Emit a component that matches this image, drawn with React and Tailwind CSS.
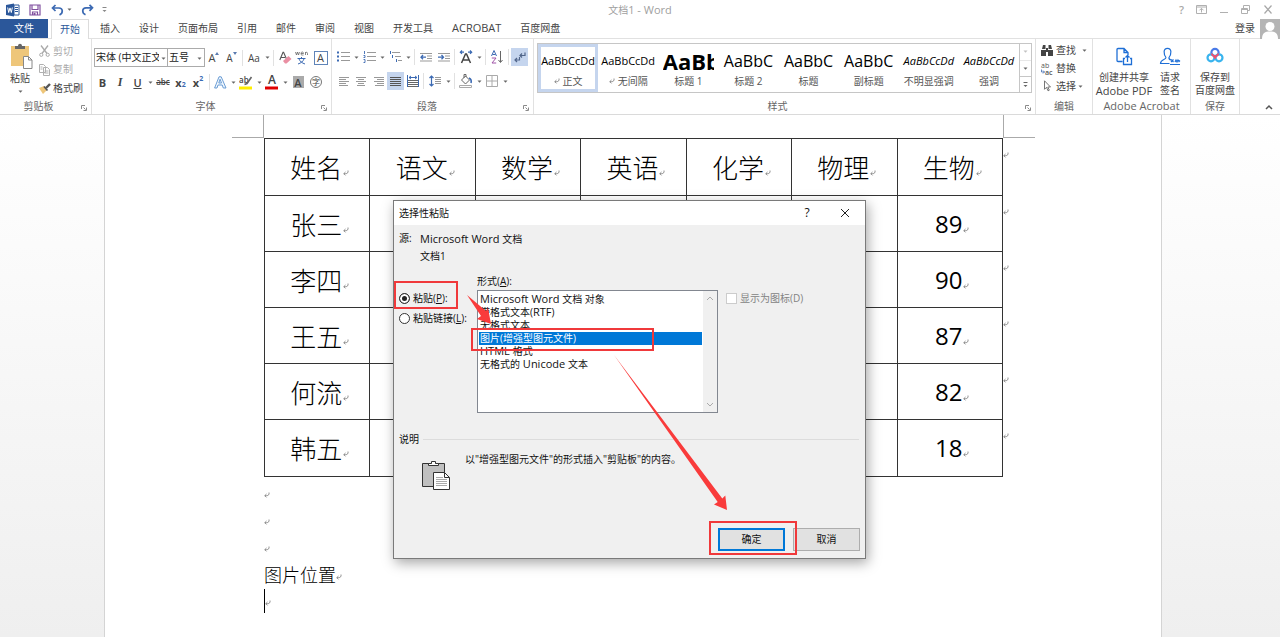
import React from "react";

const UI = "font-['Open_Sans','Noto_Sans_CJK_SC',sans-serif]";

function Svg({ w, h, children, className = "" }) {
  return (
    <svg width={w} height={h} viewBox={`0 0 ${w} ${h}`} fill="none" className={`shrink-0 ${className}`} aria-hidden="true">
      {children}
    </svg>
  );
}

// Latin runs are set one pixel larger than the Chinese text around them.
function Mixed({ text }) {
  return (
    <span className="whitespace-pre">
      {text.split(/([A-Za-z ]{3,})/).map((part, i) => (
        <span key={i} className={i % 2 ? "text-[11px]" : ""}>{part}</span>
      ))}
    </span>
  );
}

function Caret({ label = "更多选项", className = "w-2" }) {
  return (
    <button type="button" aria-label={label} className={`flex h-[18px] items-center justify-center ${className}`}>
      <Svg w={5} h={3}><path d="M0.5 0.5h4L2.5 2.7z" fill="#666" /></Svg>
    </button>
  );
}

function Sep() {
  return <span className="mx-[2px] h-4 w-px bg-[#e1e1e1]" />;
}

function Tool({ label, className = "w-[18px]", children }) {
  return (
    <button type="button" aria-label={label} className={`flex h-[18px] shrink-0 items-center justify-center leading-none ${className}`}>
      {children}
    </button>
  );
}

function Launcher() {
  return (
    <button type="button" aria-label="对话框启动器" className="absolute right-[4px] bottom-[3px]">
      <Svg w={6} h={6}><path d="M0.5 4V0.5H4M2.5 2.5l2 2M5.5 2.5v3h-3" stroke="#8a8a8a" /></Svg>
    </button>
  );
}

function Group({ title, launcher, className = "", children }) {
  return (
    <section className={`relative flex flex-col border-r border-[#e1e1e1] ${className}`}>
      <div className="h-[60px]">{children}</div>
      <div className={`text-center text-[10px] leading-4 text-[#666] ${launcher ? "pr-[14px]" : ""}`}>{title}</div>
      {launcher && <Launcher />}
    </section>
  );
}

function Mark({ className = "" }) {
  return (
    <Svg w={6} h={6} className={className}><path d="M5 0.5c0.4 2-0.5 3.2-2.5 3.2H0.8M2.5 2L0.8 3.7l1.7 1.7" stroke="#777" strokeWidth="0.8" /></Svg>
  );
}

function TitleBar() {
  return (
    <header className="grid h-[19px] grid-cols-[1fr_auto_1fr] items-center">
      <div className="flex items-center pl-[6px]">
        <Svg w={14} h={14}>
          <path d="M8 2h5v10H8z" fill="#fff" stroke="#2b579a" />
          <path d="M9 4.5h3M9 6.5h3M9 8.5h3" stroke="#2b579a" />
          <path d="M0 2l8-1.5v13L0 12z" fill="#2b579a" />
          <path d="M1.7 4.5l1 5 1.3-4.6 1.3 4.6 1-5" stroke="#fff" />
        </Svg>
        <button type="button" aria-label="保存" className="ml-[9px]">
          <Svg w={12} h={12}><path d="M1 1h10v10H1zM3 1v4.5h6V1M3.5 11V8h5v3" stroke="#80509f" strokeWidth="1.2" /><path d="M4.5 9h2v2h-2z" fill="#80509f" /></Svg>
        </button>
        <button type="button" aria-label="撤消" className="ml-[10px]">
          <Svg w={13} h={12}><path d="M4.5 1L1.5 4l3 3M2 4h6c4 0 4.5 5 0.5 7" stroke="#3c6ab3" strokeWidth="1.7" /></Svg>
        </button>
        <Caret label="撤消列表" className="w-[10px]" />
        <button type="button" aria-label="重复" className="ml-[7px]">
          <Svg w={13} h={12}><path d="M8.5 0.8l3 3-3 3M11 3.8H5C1 3.8 0.5 9 4.5 10.8" stroke="#3c6ab3" strokeWidth="1.7" /></Svg>
        </button>
        <button type="button" aria-label="自定义快速访问工具栏" className="ml-[8px]">
          <Svg w={5} h={6}><path d="M0.5 0.5h4" stroke="#888" /><path d="M0.5 3h4L2.5 5z" fill="#888" /></Svg>
        </button>
      </div>
      <h1 className="text-[11px] leading-[18px] text-[#a0a0a0]"><span className="text-[10px]">文档</span>1 - Word</h1>
      <div className="flex items-center justify-end gap-[12px] pr-[7px] text-[#a8a8a8]">
        <button type="button" aria-label="帮助" className="text-[11px] font-semibold leading-none">?</button>
        <button type="button" aria-label="功能区显示选项">
          <Svg w={11} h={9}><path d="M0.5 0.5h10v8h-10zM0.5 2h10M5.5 7.5V3.5M3.5 5.3l2-2 2 2" stroke="#b0b0b0" /></Svg>
        </button>
        <button type="button" aria-label="最小化"><Svg w={10} h={9}><path d="M1 7.5h8" stroke="#b0b0b0" /></Svg></button>
        <button type="button" aria-label="还原"><Svg w={10} h={9}><path d="M0.5 3.5h6v5h-6zM2.5 3V0.5h6v5H7M0.5 4.5h6" stroke="#b0b0b0" /></Svg></button>
        <button type="button" aria-label="关闭"><Svg w={10} h={9}><path d="M1.5 0.5l7 8M8.5 0.5l-7 8" stroke="#a8a8a8" strokeWidth="1.2" /></Svg></button>
      </div>
    </header>
  );
}

const TABS = ["插入", "设计", "页面布局", "引用", "邮件", "审阅", "视图", "开发工具", "ACROBAT", "百度网盘"];

function Tabs() {
  return (
    <nav className="flex h-5 items-stretch border-b border-[#e1e1e1] text-[10px] text-[#444]">
      <button type="button" className="w-12 bg-[#2b579a] text-white">文件</button>
      <button type="button" className="-mb-px ml-[3px] w-[38px] border border-b-0 border-[#dcdcdc] bg-white text-[#2b579a]">开始</button>
      <div className="flex grow gap-[19px] pl-[11px]">
        {TABS.map((t) => (
          <button key={t} type="button" className={t === "ACROBAT" ? "text-[11px]" : ""}>{t}</button>
        ))}
      </div>
      <button type="button" className="mr-[5px]">登录</button>
      <Svg w={20} h={20}><path d="M0 0h20v20H0z" fill="#b5b5b5" /><circle cx="10" cy="7.5" r="4.5" fill="#fff" /><path d="M2 20c0-6 3-7.5 8-7.5s8 1.5 8 7.5z" fill="#fff" /></Svg>
    </nav>
  );
}

function Clipboard() {
  return (
    <Group title="剪贴板" launcher className="w-[92px]">
      <div className="flex pt-[3px] whitespace-nowrap">
        <button type="button" className="ml-[7px] flex w-[26px] flex-col items-center text-[10px] leading-3 text-[#444]">
          <Svg w={25} h={28} className="mb-[2px]">
            <path d="M3 4h18v20H3z" fill="#eec67a" />
            <path d="M7 7V4h3c0-3 4-3 4 0h3v3z" fill="#666" />
            <path d="M15.5 14.5h5l3.5 3.5v8.5h-8.5z" fill="#fff" stroke="#888" /><path d="M20.5 14.5V18H24" stroke="#888" />
          </Svg>
          粘贴
          <Svg w={5} h={3} className="mt-[6px]"><path d="M0.5 0.5h4L2.5 2.7z" fill="#666" /></Svg>
        </button>
        <div className="ml-[6px] flex flex-col text-[10px] text-[#aaa]">
          <button type="button" className="flex h-[18px] items-center gap-[3px]">
            <Svg w={11} h={12}><path d="M2 0.5l6 8M9 0.5l-6 8" stroke="#aaa" strokeWidth="1.3" /><circle cx="2.3" cy="9.8" r="1.6" stroke="#aaa" /><circle cx="8.7" cy="9.8" r="1.6" stroke="#aaa" /></Svg>剪切
          </button>
          <button type="button" className="flex h-[19px] items-center gap-[3px]">
            <Svg w={11} h={12}><path d="M0.5 0.5h4l2 2v6h-6zM4.5 3.5h4l2 2v6h-6zM5.5 7h4M5.5 9h4M1.5 3h2M1.5 5h2" stroke="#b0b0b0" /></Svg>复制
          </button>
          <button type="button" className="flex h-[18px] items-center gap-[2px] text-[#444]">
            <Svg w={12} h={11}><path d="M0 5l5-2 3 4-4 4z" fill="#eec67a" /><path d="M5 3.5l3.5 4" stroke="#555" strokeWidth="1.6" /><path d="M7 5l4-4" stroke="#555" strokeWidth="2.4" /></Svg>格式刷
          </button>
        </div>
      </div>
    </Group>
  );
}

function FontGroup() {
  return (
    <Group title="字体" launcher className="w-[240px] pl-[2px]">
      <div className="flex items-center pt-[9px] text-[#444]">
        <div className="flex h-[19px] w-[74px] border border-[#ababab]">
          <select aria-label="字体" className="w-[64px] appearance-none overflow-hidden text-clip pl-px text-[10px] text-[#222]"><option>宋体 (中文正文)</option></select>
          <Caret label="字体列表" />
        </div>
        <div className="flex h-[19px] w-[37px] border border-l-0 border-[#ababab]">
          <select aria-label="字号" className="w-[27px] appearance-none pl-px text-[10px] text-[#222]"><option>五号</option></select>
          <Caret label="字号列表" />
        </div>
        <Tool label="增大字号"><span className="text-[11px]">A</span><Svg w={4} h={3} className="mb-2"><path d="M0 3l2-3 2 3z" fill="#5a7bb0" /></Svg></Tool>
        <Tool label="减小字号" className="w-[17px]"><span className="text-[10px]">A</span><Svg w={4} h={3} className="mb-2"><path d="M0 0l2 3 2-3z" fill="#5a7bb0" /></Svg></Tool>
        <Sep />
        <Tool label="更改大小写"><span className="text-[10px]">Aa</span></Tool>
        <Caret />
        <Sep />
        <Tool label="清除所有格式"><Svg w={13} h={13}><path d="M0.8 9L4 1.200h0.600L7.500 8M2 6.500h4" stroke="#555" strokeWidth="1.100" /><path d="M4 10l5.500-5 3 3-5 4.500H6z" fill="#ea8fa3" /></Svg></Tool>
        <Tool label="拼音指南" className="w-[15px]"><Svg w={13} h={15}><path d="M0.500 2l1 3 1-3 1 3 1-3M6 3.500h2.500c0-2-2.500-2-2.500 0s1 1.500 2.500 1.500M10.500 5V2M10.500 3c0.500-1 2-1 2 0.500V5" stroke="#666" strokeWidth="0.800" /><path d="M2.500 8.500h8M6.500 7v1.500M4 9c1 2.500 3 4 6 5M9 9c-1 2.500-3 4-6 5" stroke="#3c6ab3" /></Svg></Tool>
        <Tool label="字符边框" className="ml-[2px] w-[19px]"><span className="flex size-[14px] items-center justify-center border border-[#5f84b8] text-[11px]">A</span></Tool>
      </div>
      <div className="flex items-center pt-[6px] text-[11px] text-[#444]">
        <Tool label="加粗" className="w-[17px] font-bold">B</Tool>
        <Tool label="倾斜"><em className="font-['Liberation_Serif',serif] text-[12px] font-bold">I</em></Tool>
        <Tool label="下划线" className="w-[17px] font-semibold"><span className="underline">U</span></Tool>
        <Caret />
        <Tool label="删除线"><span className="text-[8px] font-semibold line-through">abc</span></Tool>
        <Tool label="下标" className="w-[17px] font-bold">x<span className="mt-1 text-[7px] text-[#3c6ab3]">2</span></Tool>
        <Tool label="上标" className="w-[18px] font-bold">x<span className="mb-2 text-[7px] text-[#3c6ab3]">2</span></Tool>
        <Sep />
        <Tool label="文本效果" className="w-[17px]"><Svg w={13} h={13}><path d="M0.600 12L5 0.800h2.200L12 12H9.300L8.200 9H4L3 12zM4.800 7h2.700L6.100 3.200z" stroke="#5b93d0" strokeWidth="0.900" fill="#f1f7fd" /></Svg></Tool>
        <Caret />
        <Tool label="突出显示"><Svg w={14} h={15}><text x="0" y="8" fontSize="8" fill="#444" fontFamily="Open Sans" fontWeight="600">ab</text><path d="M12.5 2L8 8.5l-2.5 1" stroke="#666" strokeWidth="1.6" /><path d="M0 11.5h13v3H0z" fill="#ffee00" /></Svg></Tool>
        <Caret />
        <Tool label="字体颜色"><Svg w={14} h={15}><text x="3" y="9" fontSize="12" fill="#444" fontFamily="Open Sans" fontWeight="600">A</text><path d="M0 11.5h13v3H0z" fill="#e00000" /></Svg></Tool>
        <Caret />
        <Tool label="字符底纹"><span className="flex h-3 w-[11px] items-center justify-center bg-[#aaa] text-[11px] font-semibold">A</span></Tool>
        <Tool label="带圈字符"><span className="flex size-[12px] items-center justify-center rounded-full border border-[#777] text-[8px]">字</span></Tool>
      </div>
    </Group>
  );
}

function Lines({ xs, color = "#999" }) {
  return <path d={xs.map(([a, b], i) => `M${a} ${1.5 + i * 2}H${b}`).join("")} stroke={color} />;
}

function Paragraph() {
  return (
    <Group title="段落" launcher className="w-[202px] pl-[3px]">
      <div className="flex items-center pt-[9px]">
        <Tool label="项目符号" className="w-[17px]"><Svg w={13} h={12}><path d="M0 1.5h2M0 5.5h2M0 9.5h2" stroke="#3c6ab3" strokeWidth="2" /><path d="M4 1.5h9M4 5.5h9M4 9.5h9" stroke="#999" /></Svg></Tool>
        <Caret className="w-[9px]" />
        <Tool label="编号" className="w-[17px]"><Svg w={13} h={12}><path d="M1.5 0v3M0.5 4.5h1.5v2H0.5M0.5 8.5h1.5v3H0.5" stroke="#3c6ab3" strokeWidth="0.9" /><path d="M4 1.5h9M4 5.5h9M4 9.5h9" stroke="#999" /></Svg></Tool>
        <Caret className="w-[9px]" />
        <Tool label="多级列表" className="w-[17px]"><Svg w={13} h={12}><path d="M1.5 0v3M3.5 4v3M7.5 8v3" stroke="#3c6ab3" /><path d="M3 1.5h8M6 5.5h6M9 9.5h4" stroke="#999" /></Svg></Tool>
        <Caret />
        <Sep />
        <Tool label="减少缩进量"><Svg w={12} h={9}><path d="M0 0.500h12M7 3h5M7 5.500h5M0 8h12" stroke="#999" /><path d="M3 2L1 4.200l2 2M1 4.200h5" stroke="#3c6ab3" strokeWidth="1.3" /></Svg></Tool>
        <Tool label="增加缩进量" className="w-[17px]"><Svg w={12} h={9}><path d="M0 0.500h12M7 3h5M7 5.500h5M0 8h12" stroke="#999" /><path d="M3.5 2l2 2.200-2 2M0 4.200h5" stroke="#3c6ab3" strokeWidth="1.3" /></Svg></Tool>
        <Sep />
        <Tool label="中文版式"><Svg w={14} h={14}><path d="M2.5 13L6.500 4h1l4 9M4.500 10h5.500" stroke="#444" strokeWidth="1.5" /><path d="M3 0.5L1.300 2.2l1.700 1.7M1.300 2.2H5M11 0.5l1.700 1.7L11 3.900M12.700 2.2H9" stroke="#3c6ab3" strokeWidth="1.2" /></Svg></Tool>
        <Caret />
        <Sep />
        <Tool label="排序"><Svg w={13} h={14}><path d="M0.5 6L3 0.5 5.5 6M1.5 4.5h3" stroke="#3c6ab3" /><path d="M0.8 8h4.2l-4 5h4.2" stroke="#a054a8" /><path d="M9.5 1v11M7.5 10l2 2.5 2-2.5" stroke="#666" /></Svg></Tool>
        <Sep />
        <Tool label="显示编辑标记" className="w-[17px] bg-[#c5d5ee]"><Svg w={12} h={11}><path d="M11 0.5v3H6M8 1.5l-2 2 2 2M5.5 5v3H1M3 6l-2 2 2 2" stroke="#50658a" strokeWidth="1.2" /></Svg></Tool>
      </div>
      <div className="flex items-center pt-[6px]">
        <Tool label="左对齐" className="w-[17px]"><Svg w={10} h={11}><Lines xs={[[0, 10], [0, 7], [0, 10], [0, 7], [0, 9]]} /></Svg></Tool>
        <Tool label="居中"><Svg w={10} h={11}><Lines xs={[[0, 10], [2, 8], [0, 10], [2, 8], [1, 9]]} /></Svg></Tool>
        <Tool label="右对齐" className="w-[17px]"><Svg w={10} h={11}><Lines xs={[[0, 10], [3, 10], [0, 10], [3, 10], [1, 10]]} /></Svg></Tool>
        <Tool label="两端对齐" className="w-[17px] bg-[#c5d5ee]"><Svg w={11} h={11}><Lines color="#555" xs={[[0, 11], [0, 11], [0, 11], [0, 11], [0, 11]]} /></Svg></Tool>
        <Tool label="分散对齐" className="w-[17px]"><Svg w={12} h={12}><path d="M0.5 0v12M11.5 0v12M2 2.5h8M4 1L2 2.5 4 4M8 1l2 1.5L8 4" stroke="#3c6ab3" /><path d="M1 5.5h10M1 7.5h10M1 9.5h10M1 11.5h10" stroke="#666" /></Svg></Tool>
        <Sep />
        <Tool label="行距"><Svg w={12} h={12}><path d="M2.5 1v10M0.5 3l2-2 2 2M0.5 9l2 2 2-2" stroke="#3c6ab3" strokeWidth="1.2" /><path d="M6 2.5h6M6 4.5h6M6 6.5h6M6 8.5h6" stroke="#999" /></Svg></Tool>
        <Caret />
        <Sep />
        <Tool label="底纹"><Svg w={14} h={14}><path d="M2.5 6l4-4 4 4-4 4z" stroke="#666" /><path d="M5 4V0.5h2V3" stroke="#666" /><path d="M10 4c2.5 1 2.5 3 2 5" stroke="#3c6ab3" strokeWidth="1.6" /><path d="M0.5 11.5h12v2h-12z" stroke="#aaa" /></Svg></Tool>
        <Caret />
        <Tool label="边框"><Svg w={12} h={12}><path d="M0.5 0.5h11v11H0.5zM6 0.5v11M0.5 6h11" stroke="#aaa" /></Svg></Tool>
        <Caret />
      </div>
    </Group>
  );
}

const STYLES = [
  { name: "正文", sample: "AaBbCcDd", cls: "text-[11px]", mark: true, active: true },
  { name: "无间隔", sample: "AaBbCcDd", cls: "text-[11px]", mark: true },
  { name: "标题 1", sample: "AaBb", cls: "max-w-[51px] overflow-hidden text-[22px] font-bold" },
  { name: "标题 2", sample: "AaBbC", cls: "text-[16px]" },
  { name: "标题", sample: "AaBbC", cls: "text-[16px]" },
  { name: "副标题", sample: "AaBbC", cls: "text-[16px]" },
  { name: "不明显强调", sample: "AaBbCcDd", cls: "text-[11px] italic text-[#555]" },
  { name: "强调", sample: "AaBbCcDd", cls: "text-[11px] italic" },
];

function Gallery() {
  return (
    <Group title="样式" launcher className="min-w-0 grow basis-0 px-[3px]">
      <div className="mt-1 flex h-[50px] border border-[#c6c6c6]">
        <div className="flex grow">
          {STYLES.map((s) => (
            <button key={s.name} type="button" className={`flex min-w-0 grow basis-0 flex-col items-center ${s.active ? "shadow-[inset_0_0_0_3px_#c5d5ee]" : ""}`}>
              <span className={`mt-[3px] block h-7 leading-7 whitespace-nowrap text-black ${s.cls}`}>{s.sample}</span>
              <span className="flex items-center gap-[3px] text-[10px] leading-3 whitespace-nowrap text-[#555]">{s.mark && <Mark />}{s.name}</span>
            </button>
          ))}
        </div>
        <div className="flex w-3 flex-col divide-y divide-[#c6c6c6] border-l border-[#c6c6c6]">
          <Caret label="上一行" className="w-full grow opacity-40" />
          <Caret label="下一行" className="w-full grow" />
          <button type="button" aria-label="其他样式" className="flex h-4 items-center justify-center"><Svg w={5} h={6}><path d="M0.5 0.5h4" stroke="#666" /><path d="M0.5 3h4L2.5 5z" fill="#666" /></Svg></button>
        </div>
      </div>
    </Group>
  );
}

function BigButton({ icon, lines, className }) {
  return (
    <button type="button" className={`flex flex-col items-center pt-[8px] text-[10px] leading-[13px] whitespace-nowrap text-[#444] ${className}`}>
      <span className="flex h-[24px] items-start">{icon}</span>
      {lines.map((l) => <span key={l} className={l === "Adobe PDF" ? "text-[11px]" : ""}>{l}</span>)}
    </button>
  );
}

function Ribbon() {
  return (
    <div className="flex h-[76px] border-b border-[#dadada] bg-white">
      <Clipboard />
      <FontGroup />
      <Paragraph />
      <Gallery />
      <Group title="编辑" className="w-[57px]">
        <div className="flex flex-col pt-[2px] pl-[5px] text-[10px] text-[#444]">
          <div className="flex h-[18px] items-center">
            <button type="button" className="flex items-center gap-[3px]"><Svg w={12} h={11}><path d="M1 4l1-4h2.5v4zM7.5 4V0H10l1 4zM0 5h5v6H0zM7 5h5v6H7zM5 3h2v4H5z" fill="#444" /></Svg>查找</button>
            <Caret className="ml-[4px] w-2" />
          </div>
          <button type="button" className="flex h-[18px] items-center gap-[3px]"><Svg w={12} h={13}><text x="0" y="6" fontSize="7" fill="#555" fontFamily="Open Sans">ab</text><text x="4" y="12.500" fontSize="7" fill="#555" fontFamily="Open Sans" fontWeight="600">ac</text><path d="M0.500 7.5v2.500h3M2 8.5l1.5 1.5L2 11.5" stroke="#3c6ab3" strokeWidth="0.8" /></Svg>替换</button>
          <div className="flex h-[18px] items-center">
            <button type="button" className="flex items-center gap-[3px]"><Svg w={12} h={12}><path d="M3.5 0.8v8.5l2-2 1.5 3.5 1.3-0.6-1.5-3.2h2.7z" stroke="#666" strokeWidth="0.9" /></Svg>选择</button>
            <Caret />
          </div>
        </div>
      </Group>
      <Group title={<span className="text-[11px]">Adobe Acrobat</span>} className="w-[98px]">
        <div className="flex">
          <BigButton className="w-[62px]" lines={["创建并共享", "Adobe PDF"]} icon={
            <Svg w={17} h={19}><path d="M6.5 14.5H2a1 1 0 0 1-1-1v-11a1 1 0 0 1 1-1h6l4 4v2.5M8 1.5v4h4M9 11.5H7.5v6h8v-6H14M11.5 15V8.5M9.5 10.5l2-2 2 2" stroke="#1f6fd6" strokeWidth="1.3" /></Svg>} />
          <BigButton className="w-[30px]" lines={["请求", "签名"]} icon={
            <Svg w={22} h={20}><path d="M7 10.5C4.5 7 4 1.3 8.5 1.3S12.5 7 10 10.5c-0.3 1.5 0.5 2 2 2.5M7 10.5c0 2.5-5.5 1.5-5.5 6h9M11 17.5h10M12 12.5l2.5 2.5m0-2.5L12 15M16 15l1-2 1 2 1-2 1 1.5 1-1" stroke="#1f6fd6" strokeWidth="1.2" /></Svg>} />
        </div>
      </Group>
      <Group title="保存" className="w-[49px]">
        <BigButton className="w-full" lines={["保存到", "百度网盘"]} icon={
          <Svg w={18} h={18}><circle cx="9" cy="5.5" r="3.6" stroke="#4a7be8" strokeWidth="2.2" /><circle cx="5" cy="10.8" r="3.500" stroke="#39b4ee" strokeWidth="2.2" /><circle cx="13" cy="10.8" r="3.500" stroke="#39b4ee" strokeWidth="2.2" /><path d="M5.600 6.500c0.600 1.800 2 2.600 3.400 2.600s2.800-0.800 3.400-2.600M7 8l2 3 2-3" stroke="#f0506e" strokeWidth="1.800" /></Svg>} />
      </Group>
      <div className="flex w-10 items-end justify-end pr-[7px] pb-1">
        <button type="button" aria-label="折叠功能区"><Svg w={8} h={6}><path d="M1 5l3-3 3 3" stroke="#555" strokeWidth="1.5" /></Svg></button>
      </div>
    </div>
  );
}

const HEAD = ["姓名", "语文", "数学", "英语", "化学", "物理", "生物"];
const ROWS = [["张三", "89"], ["李四", "90"], ["王五", "87"], ["何流", "82"], ["韩五", "18"]];

function Cell({ text, end }) {
  return (
    <>
      <span className="flex items-center justify-center pl-[5px]">
        {text}
        {text && <Mark className="mt-3 ml-px" />}
      </span>
      {end && <Mark className="absolute top-[13px] -right-[7px]" />}
    </>
  );
}

function ScoreTable() {
  return (
    <table className="w-full table-fixed border-collapse text-[26px] leading-none font-light text-black">
      <thead>
        <tr className="h-[57px]">
          {HEAD.map((h, i) => (
            <th key={h} className="relative border border-[#333] p-0 font-light"><Cell text={h} end={i === 6} /></th>
          ))}
        </tr>
      </thead>
      <tbody>
        {ROWS.map(([name, score]) => (
          <tr key={name} className="h-14 last:h-[57px]">
            {HEAD.map((h, i) => (
              <td key={h} className={`relative border border-[#333] p-0 ${i === 6 ? "font-['Open_Sans',sans-serif] text-[24px] font-normal" : ""}`}>
                <Cell text={i === 0 ? name : i === 6 ? score : ""} end={i === 6} />
              </td>
            ))}
          </tr>
        ))}
      </tbody>
    </table>
  );
}

const FORMATS = ["Microsoft Word 文档 对象", "带格式文本(RTF)", "无格式文本", "图片(增强型图元文件)", "HTML 格式", "无格式的 Unicode 文本"];

function PasteDialog() {
  return (
    <div role="dialog" aria-label="选择性粘贴" className={`absolute top-[85px] left-[288px] flex min-h-[359px] w-[473px] flex-col border border-[#7a7a7a] bg-[#f0f0f0] text-[10px] text-[#111] shadow-[2px_4px_12px_rgba(0,0,0,0.35)] ${UI}`}>
      <div className="flex h-6 items-center bg-white pl-[5px]">
        <h2 className="grow">选择性粘贴</h2>
        <button type="button" aria-label="帮助" className="w-6 text-[12px]">?</button>
        <button type="button" aria-label="关闭" className="mr-[15px] ml-[21px]"><Svg w={10} h={10}><path d="M1 1l8 8M9 1l-8 8" stroke="#222" /></Svg></button>
      </div>
      <div className="grid grid-cols-[21px_1fr] pt-[5px] pl-[5px] leading-[17px]">
        <span>源:</span>
        <Mixed text="Microsoft Word 文档" />
        <span />
        <span>文档1</span>
      </div>
      <div className="mt-[7px] flex">
        <div className="w-[83px] pt-4 pl-[5px] whitespace-nowrap">
          <label className="flex h-5 items-center gap-[3px]">
            <input type="radio" name="mode" defaultChecked className="size-[11px] appearance-none rounded-full border border-[#333] bg-white checked:bg-[#222] checked:shadow-[inset_0_0_0_2px_#fff]" />
            <span>粘贴(<u>P</u>):</span>
          </label>
          <label className="flex h-5 items-center gap-[3px]">
            <input type="radio" name="mode" className="size-[11px] appearance-none rounded-full border border-[#333] bg-white" />
            <span>粘贴链接(<u>L</u>):</span>
          </label>
        </div>
        <div className="w-[241px]">
          <div id="format-label" className="leading-[18px]">形式(<u>A</u>):</div>
          <div className="flex h-[123px] border border-[#828790] bg-white">
            <ul role="listbox" aria-labelledby="format-label" className="grow px-px pt-[2px]">
              {FORMATS.map((f, i) => (
                <li key={f} role="option" aria-selected={i === 3} className={`flex h-[13px] items-center overflow-hidden pl-px ${i === 3 ? "bg-[#0078d7] text-white" : ""}`}><Mixed text={f} /></li>
              ))}
            </ul>
            <div className="flex w-[14px] flex-col items-center justify-between bg-[#f0f0f0] py-[5px]">
              <Svg w={8} h={5}><path d="M1 4l3-3 3 3" stroke="#aaa" /></Svg>
              <Svg w={8} h={5}><path d="M1 1l3 3 3-3" stroke="#aaa" /></Svg>
            </div>
          </div>
        </div>
        <label className="ml-2 box-content flex h-5 items-center gap-[3px] self-start pt-4 text-[#838383]">
          <input type="checkbox" disabled className="size-[11px] appearance-none border border-[#ccc] bg-white" />
          显示为图标(D)
        </label>
      </div>
      <div className="mt-[18px] flex items-center gap-1 pr-[6px] pl-[5px] leading-4">
        说明<span className="h-px grow bg-[#dcdcdc]" />
      </div>
      <div className="mt-1 flex pl-[27px] leading-4">
        <Svg w={30} h={31} className="mt-[9px] mr-[14px]">
          <path d="M1.500 3.500h22v23h-22z" fill="#c0c0c0" stroke="#333" />
          <path d="M7.500 5.5v-2h3v-2h4v2h3v2z" fill="#fff" stroke="#333" />
          <path d="M12.5 12.5h11l5 5v12h-16z" fill="#fff" stroke="#333" />
          <path d="M23.5 12.5v5h5" stroke="#333" /><path d="M15 17.5h7M15 19.5h11M15 21.5h11M15 23.5h11M15 25.5h11" stroke="#aaa" />
        </Svg>
        <p>以"增强型图元文件"的形式插入"剪贴板"的内容。</p>
      </div>
      <div className="mt-auto flex justify-end gap-2 pr-[5px] pb-[7px]">
        <button type="button" className="h-[23px] w-[67px] border-2 border-[#0078d7] bg-[#e1e1e1]">确定</button>
        <button type="button" className="h-[23px] w-[67px] border border-[#adadad] bg-[#e1e1e1]">取消</button>
      </div>
      <Annotations />
    </div>
  );
}

function Annotations() {
  return (
    <svg className="pointer-events-none absolute top-0 left-0 size-full" fill="none" aria-hidden="true">
      <path d="M1 81h62v26H1zM78 128h181v21H78zM316 321h86v32h-86z" stroke="#f0393b" strokeWidth="2" />
      <path d="M73 94l19 16 2-3 3 16-14-5 4-3zM220 154l108.300 143.600 3-3L333 309l-13-5.500 3.700-2.500z" fill="#f93b3b" />
    </svg>
  );
}

function Page() {
  return (
    <main className="flex grow justify-center bg-linear-to-b from-white to-[#efefef] pr-[14px]">
      <div className="relative w-[1058px] border-x border-[#d4d4d4] bg-white pr-[158px] pl-[159px] font-['Noto_Sans_CJK_SC',sans-serif]">
        <div className="-mx-8 flex h-[23px] items-stretch">
          <span className="w-8 border-r border-b border-[#aaa]" />
          <span className="grow" />
          <span className="w-8 border-b border-l border-[#aaa]" />
        </div>
        <ScoreTable />
        <div className="pt-1">
          <p className="flex h-[27px] items-center"><Mark /></p>
          <p className="flex h-[27px] items-center"><Mark /></p>
          <p className="flex h-[27px] items-center"><Mark /></p>
          <p className="flex h-6 items-center text-[18px] leading-none font-light text-black">图片位置<Mark className="mt-[6px]" /></p>
          <p className="mt-[3px] flex h-6 items-center border-l border-black"><Mark className="mt-1" /></p>
        </div>
        <PasteDialog />
      </div>
    </main>
  );
}

export default function App() {
  return (
    <div className={`flex min-h-screen flex-col overflow-hidden bg-white ${UI}`}>
      <TitleBar />
      <Tabs />
      <Ribbon />
      <Page />
    </div>
  );
}
